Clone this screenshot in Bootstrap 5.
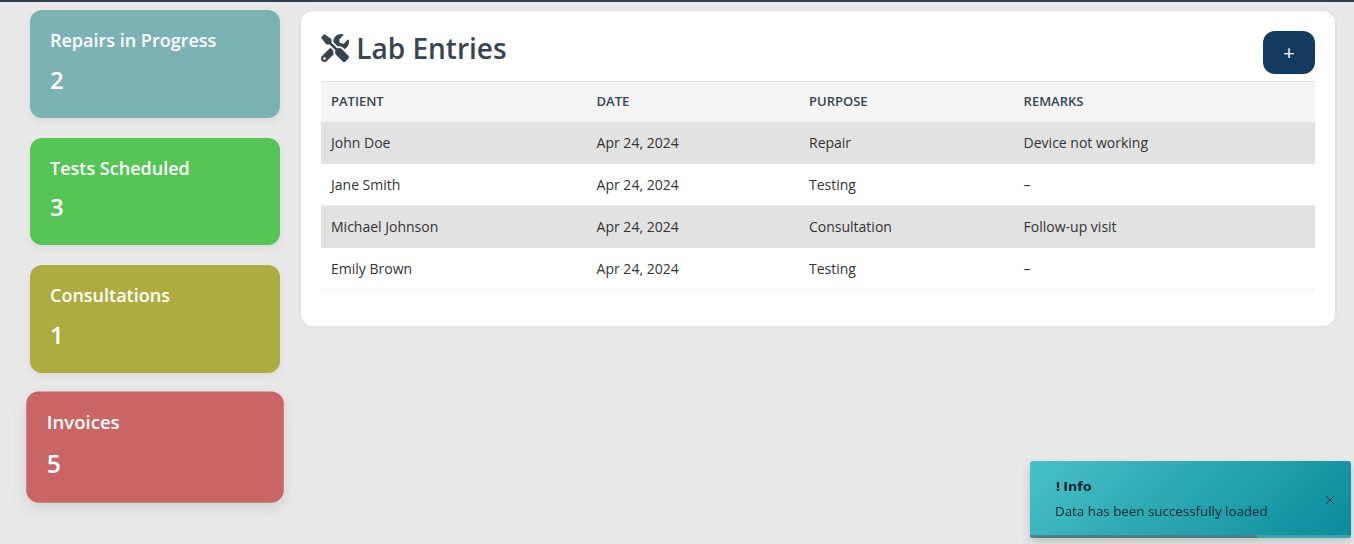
<!DOCTYPE html>
<html lang="en">
<head>
<meta charset="utf-8">
<title>Lab Entries</title>
<link href="https://cdn.jsdelivr.net/npm/bootstrap@5.3.0/dist/css/bootstrap.min.css" rel="stylesheet">
<style>
html,body{height:544px;overflow:hidden}
body{background:#e9e9e9;font-family:"Open Sans","Noto Sans",sans-serif;color:#333;border-top:2px solid #2c3e50}
.shell{gap:21px;padding:8px 19px 0 30px}
.side-col{width:250px;flex:none;gap:20px}
.stat{height:107.6px;border-radius:12px;color:#fff;padding:20px;box-shadow:0 4px 10px rgba(0,0,0,.06)}
.stat-title{font-size:18px;font-weight:600;line-height:21.6px;margin:0 0 13px}
.stat-num{font-size:24px;font-weight:600;line-height:29px}
.st-teal{background:#7bb3b5}.st-green{background:#55c655}.st-olive{background:#adac3f}
.st-red{background:#c96565;transform:scale(1.03);box-shadow:0 6px 14px rgba(0,0,0,.1)}
.panel{background:#fff;border-radius:12px;flex:1;height:315px;margin-top:1px;padding:20px;box-shadow:0 0 4px rgba(0,0,0,.08)}
.panel-title{font-size:28px;font-weight:600;line-height:34px;color:#36454f;margin:0}
.panel-title svg{width:28px;height:28px;fill:#36454f;vertical-align:-3px}
.add-btn{background:#143a5f;color:#fff;width:52px;height:43px;border-radius:12px;border:0;font-size:20px;padding:0;line-height:43px}
.add-btn:hover{background:#143a5f;color:#fff}
.head-row{height:50px}
.lab-table{table-layout:fixed;font-size:14px;margin:0;width:100%;border-top:1px solid #e3e3e3}
.lab-table th{background:#f5f5f5;font-size:13px;font-weight:600;text-transform:uppercase;color:#36454f;height:40px;padding:0 10px;vertical-align:middle;border:0}
.lab-table td{height:42px;padding:0 10px;vertical-align:middle;color:#333;border-bottom:1px solid #eee;background:#fff}
.lab-table tr.alt td{background:#e2e2e2;border-bottom-color:#e2e2e2}
.w1{width:265.6px}.w2{width:212.4px}.w3{width:214.6px}
.note{position:fixed;left:1030px;top:461px;width:321px;height:77px;border-radius:3px;background:linear-gradient(135deg,#48c0c7,#0a8b9b);box-shadow:0 4px 10px rgba(0,0,0,.18);padding:16px 25px;color:#12272e;overflow:hidden}
.note-title{font-family:"DejaVu Sans",sans-serif;font-weight:700;font-size:13px;line-height:20px;word-spacing:-2px;letter-spacing:-.1px}
.note-body{font-family:"Open Sans",sans-serif;font-size:13.35px;line-height:20px;margin-top:4px}
.note-x{position:absolute;right:16px;top:34px;width:10px;height:10px}
.note-x svg{display:block;stroke:#12323a;stroke-width:1}
.note-track{position:absolute;left:0;right:0;bottom:0;height:3px;background:#3da3ac}
.note-bar{height:3px;width:227px;background:#4b7f86}
</style>
</head>
<body>
<div class="d-flex align-items-start shell">
  <div class="d-flex flex-column side-col">
    <div class="stat st-teal"><div class="stat-title">Repairs in Progress</div><div class="stat-num">2</div></div>
    <div class="stat st-green"><div class="stat-title">Tests Scheduled</div><div class="stat-num">3</div></div>
    <div class="stat st-olive"><div class="stat-title">Consultations</div><div class="stat-num">1</div></div>
    <div class="stat st-red"><div class="stat-title">Invoices</div><div class="stat-num">5</div></div>
  </div>
  <div class="panel">
    <div class="d-flex justify-content-between align-items-start head-row">
      <h2 class="panel-title"><svg viewBox="0 0 512 512" aria-hidden="true"><path d="M501.1 395.7L384 278.6c-23.1-23.1-57.6-27.6-85.4-13.9L192 158.1V96L64 0 0 64l96 128h62.1l106.6 106.6c-13.6 27.8-9.2 62.3 13.9 85.4l117.1 117.1c14.6 14.6 38.2 14.6 52.7 0l52.7-52.7c14.5-14.6 14.5-38.2 0-52.7zM331.7 225c28.3 0 54.9 11 74.9 31l19.4 19.4c15.8-6.9 30.8-16.5 43.8-29.5 37.1-37.1 49.7-89.3 37.9-136.7-2.2-9-13.5-12.1-20.1-5.5l-74.4 74.4-67.9-11.3L334 98.9l74.4-74.4c6.6-6.6 3.4-17.9-5.7-20.2-47.4-11.7-99.6.9-136.6 37.9-28.5 28.5-41.9 66.1-41.2 103.6l82.1 82.1c8.1-1.9 16.5-2.9 24.7-2.9zm-103.9 82l-56.7-56.7L18.7 402.8c-25 25-25 65.5 0 90.5s65.5 25 90.5 0l123.6-123.6c-7.6-19.9-9.9-41.6-5-62.7zM64 472c-13.2 0-24-10.8-24-24 0-13.3 10.7-24 24-24s24 10.7 24 24c0 13.2-10.7 24-24 24z"/></svg> Lab Entries</h2>
      <button class="btn add-btn" type="button">+</button>
    </div>
    <table class="table lab-table">
      <thead><tr><th class="w1">Patient</th><th class="w2">Date</th><th class="w3">Purpose</th><th>Remarks</th></tr></thead>
      <tbody>
        <tr class="alt"><td>John Doe</td><td>Apr 24, 2024</td><td>Repair</td><td>Device not working</td></tr>
        <tr><td>Jane Smith</td><td>Apr 24, 2024</td><td>Testing</td><td>–</td></tr>
        <tr class="alt"><td>Michael Johnson</td><td>Apr 24, 2024</td><td>Consultation</td><td>Follow-up visit</td></tr>
        <tr><td>Emily Brown</td><td>Apr 24, 2024</td><td>Testing</td><td>–</td></tr>
      </tbody>
    </table>
  </div>
</div>
<div class="note" role="alert">
  <div class="note-title">! Info</div>
  <div class="note-body">Data has been successfully loaded</div>
  <div class="note-x"><svg viewBox="0 0 10 10" width="10" height="10"><path d="M1 1L9 9M9 1L1 9" fill="none"/></svg></div>
  <div class="note-track"><div class="note-bar"></div></div>
</div>
<script src="https://cdn.jsdelivr.net/npm/bootstrap@5.3.0/dist/js/bootstrap.bundle.min.js"></script>
</body>
</html>
